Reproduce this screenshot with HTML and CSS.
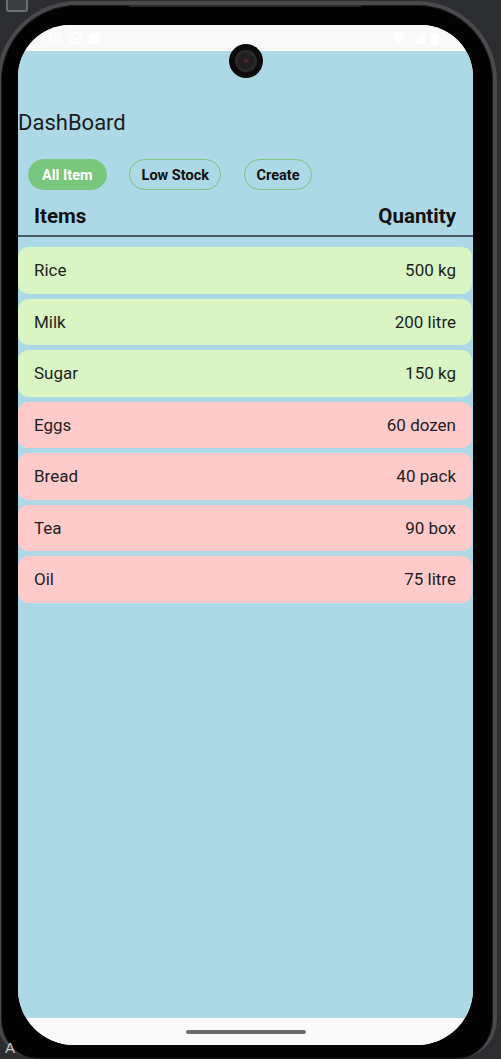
FILE: index.html
```html
<!DOCTYPE html>
<html lang="en">
<head>
<meta charset="utf-8">
<title>DashBoard</title>
<link rel="stylesheet" href="styles.css">
</head>
<body>
<div class="ide-icon"></div>
<span class="ide-label">A</span>
<div class="phone">
  <div class="speaker"></div>
  <div class="screen">
    <div class="statusbar">
      <div class="sb-left">
        <span class="sb-time">40</span>
        <svg class="sb-icon" width="14" height="14" viewBox="0 0 14 14"><circle cx="7" cy="7" r="5.5" fill="none" stroke="#fff" stroke-width="2"/><path d="M5 4 L6 8 L9 9" fill="none" stroke="#fff" stroke-width="1.6"/></svg>
        <svg class="sb-icon" width="12" height="14" viewBox="0 0 12 14"><rect x="1" y="2" width="10" height="11" rx="1.5" fill="#fff"/></svg>
      </div>
      <div class="sb-right">
        <svg width="16" height="13" viewBox="0 0 16 13"><path d="M0 2 Q8 -3 16 2 L8 12 Z" fill="#fff"/></svg>
        <svg width="12" height="13" viewBox="0 0 12 13"><path d="M12 0 L12 12 L0 12 Z" fill="#fff"/></svg>
        <svg width="8" height="13" viewBox="0 0 8 13"><rect x="0" y="1" width="8" height="12" rx="1" fill="#fff"/></svg>
      </div>
    </div>
    <div class="camera"><div class="lens"><div class="pupil"></div></div></div>
    <main class="app">
      <h1 class="title">DashBoard</h1>
      <div class="filters">
        <button class="chip chip-active">All Item</button>
        <button class="chip">Low Stock</button>
        <button class="chip">Create</button>
      </div>
      <div class="table-head">
        <span>Items</span>
        <span>Quantity</span>
      </div>
      <ul class="list">
        <li class="row row-ok"><span>Rice</span><span>500 kg</span></li>
        <li class="row row-ok"><span>Milk</span><span>200 litre</span></li>
        <li class="row row-ok"><span>Sugar</span><span>150 kg</span></li>
        <li class="row row-low"><span>Eggs</span><span>60 dozen</span></li>
        <li class="row row-low"><span>Bread</span><span>40 pack</span></li>
        <li class="row row-low"><span>Tea</span><span>90 box</span></li>
        <li class="row row-low"><span>Oil</span><span>75 litre</span></li>
      </ul>
    </main>
    <div class="navbar"><div class="home-indicator"></div></div>
  </div>
</div>
</body>
</html>
```
FILE: styles.css
```css
html, body {
  margin: 0;
  padding: 0;
  height: 1059px;
  overflow: hidden;
}
body {
  background: #2b2d30;
  font-family: Roboto, "Noto Sans", sans-serif;
  position: relative;
}
.ide-icon {
  position: absolute;
  left: 6px;
  top: -4px;
  width: 18px;
  height: 12px;
  border: 2px solid #6b6e73;
  border-radius: 3px;
  background: #3a3d41;
}
.ide-label {
  position: absolute;
  z-index: 2;
  left: 5px;
  top: 1039px;
  color: #c9c9c9;
  font-size: 15px;
  font-family: "Liberation Sans", sans-serif;
}
.phone {
  position: relative;
  margin: 1px 0 0 -3px;
  width: 500px;
  height: 1058px;
  box-sizing: border-box;
  border: 4px solid #4a4a4c;
  border-bottom-width: 0;
  border-radius: 80px 80px 40px 40px;
  background: #030303;
  box-shadow: inset 0 0 0 1px #1c1c1c;
  padding: 20px 0 0 17px;
}
.speaker {
  position: absolute;
  left: 128px;
  top: 0;
  width: 232px;
  height: 2px;
  background: #2a2a2a;
  border-radius: 1px;
}
.screen {
  position: relative;
  width: 455px;
  height: 1020px;
  border-radius: 52px 52px 56px 56px;
  overflow: hidden;
  background: #fafafa;
  display: flex;
  flex-direction: column;
}
.statusbar {
  height: 26px;
  flex: none;
  background: #f9f9f9;
  display: flex;
  justify-content: space-between;
  align-items: center;
  padding: 0 34px 0 28px;
}
.sb-left, .sb-right {
  display: flex;
  align-items: center;
  gap: 6px;
}
.sb-time {
  color: #fff;
  font-size: 14px;
  font-weight: 500;
}
.camera {
  position: absolute;
  top: 19px;
  left: 50%;
  margin-left: -17px;
  width: 34px;
  height: 34px;
  border-radius: 50%;
  background: #0b0b0b;
  display: flex;
  align-items: center;
  justify-content: center;
}
.lens {
  width: 22px;
  height: 22px;
  border-radius: 50%;
  background: radial-gradient(circle, #2b1a1e 0%, #1f1f22 45%, #2e2e31 70%, #141414 100%);
  display: flex;
  align-items: center;
  justify-content: center;
}
.pupil {
  width: 4px;
  height: 4px;
  border-radius: 50%;
  background: #5a2430;
}
.app {
  flex: 1;
  background: #add8e6;
  display: flex;
  flex-direction: column;
  padding-top: 59px;
}
.title {
  margin: 0;
  font-size: 22px;
  font-weight: 400;
  line-height: 26px;
  color: #1c1c1c;
}
.filters {
  display: flex;
  gap: 22.5px;
  margin-top: 23px;
  padding-left: 10px;
}
.chip {
  height: 31px;
  box-sizing: border-box;
  border-radius: 16px;
  border: 1px solid #7cc47f;
  background: transparent;
  color: #111;
  font-family: Roboto, sans-serif;
  font-weight: 700;
  font-size: 14.5px;
  padding: 1px 11.5px 0;
  margin: 0;
  display: flex;
  align-items: center;
}
.chip-active {
  background: #79c67d;
  border-color: #79c67d;
  color: #fff;
  padding: 1px 13px 0;
}
.table-head {
  display: flex;
  justify-content: space-between;
  margin-top: 14px;
  padding: 0 17px 7px 16px;
  font-size: 20.5px;
  font-weight: 700;
  line-height: 24px;
  color: #111;
  border-bottom: 2px solid #4a5a66;
}
.list {
  list-style: none;
  margin: 10px 0 0;
  padding: 0;
  display: flex;
  flex-direction: column;
  gap: 5px;
}
.row {
  height: 46.5px;
  border-radius: 10px;
  margin-right: 1px;
  display: flex;
  justify-content: space-between;
  align-items: center;
  padding: 0 16px;
  font-size: 17px;
  color: #1e1e1e;
}
.row-ok { background: #d8f5c3; }
.row-low { background: #ffcaca; }
.navbar {
  height: 27px;
  flex: none;
  background: #fafafa;
  display: flex;
  justify-content: center;
  padding-top: 12px;
  box-sizing: border-box;
}
.home-indicator {
  width: 120px;
  height: 4px;
  border-radius: 2px;
  background: #6e6e6e;
}
```
